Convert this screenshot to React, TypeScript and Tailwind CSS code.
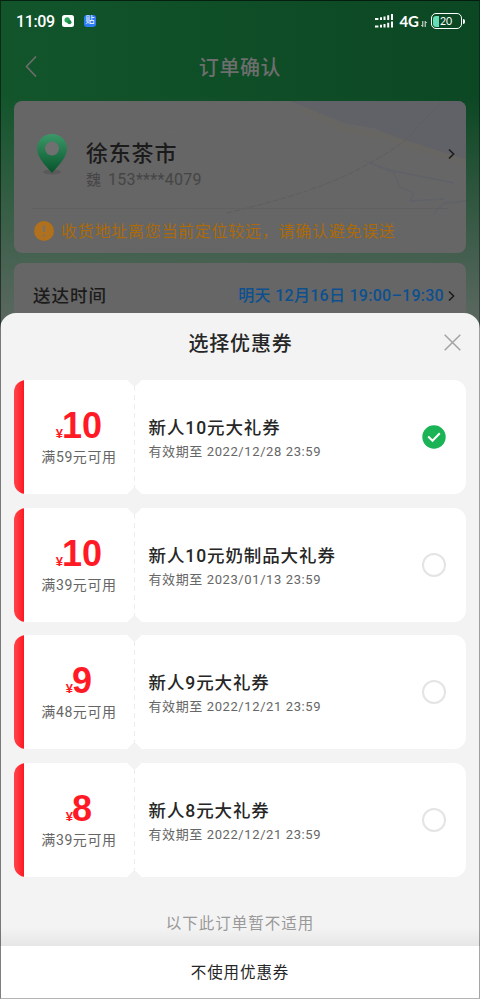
import React, { useState } from 'react';

interface Coupon {
  amount: number;
  limit: string;
  title: string;
  expire: string;
}

const coupons: Coupon[] = [
  { amount: 10, limit: '满59元可用', title: '新人10元大礼券', expire: '有效期至 2022/12/28 23:59' },
  { amount: 10, limit: '满39元可用', title: '新人10元奶制品大礼券', expire: '有效期至 2023/01/13 23:59' },
  { amount: 9, limit: '满48元可用', title: '新人9元大礼券', expire: '有效期至 2022/12/21 23:59' },
  { amount: 8, limit: '满39元可用', title: '新人8元大礼券', expire: '有效期至 2022/12/21 23:59' },
];

const Chevron: React.FC = () => (
  <svg width="7" height="12" viewBox="0 0 7 12" fill="none" stroke="#1d1d1d" strokeWidth="1.6">
    <path d="M1 1.5 5.6 6 1 10.5" />
  </svg>
);

const StatusBar: React.FC = () => (
  <div className="flex h-[42px] items-center pl-4 pr-[15px] text-white">
    <span className="w-[46px] whitespace-nowrap pt-px text-base font-medium leading-none tracking-[-0.4px]">11:09</span>
    <svg className="-mt-px" width="12" height="12" viewBox="0 0 12 12">
      <rect width="12" height="12" rx="2.5" fill="#fff" />
      <circle cx="5.2" cy="5" r="2.7" fill="#2aa45c" />
      <circle cx="7.4" cy="7.2" r="2.1" fill="#1d8a4a" />
    </svg>
    <span className="-mt-px ml-2.5 flex size-3 items-center justify-center rounded-[3px] bg-[#2d7df6] text-[9px] leading-none">贴</span>
    <div className="ml-auto flex items-center">
      <svg width="18" height="14" viewBox="0 0 18 14" fill="#fff">
        <path d="M0 4h3.4v2H0zM5 3.2h2v2.8H5zM8.5 2.4h2V6h-2zM12.2 1.3h2V6h-2zM16 0h2v6h-2z" />
        <path d="M0 11.5h3.4v2H0zM5 10.7h2v2.8H5zM8.5 9.9h2v3.6h-2zM12.2 8.8h2v4.7h-2zM16 7.5h2v6h-2z" />
      </svg>
      <span className="ml-1.5 font-['Lato'] text-[15px] font-bold leading-none">4G</span>
      <svg className="ml-0.5 mt-1.5" width="6" height="6" viewBox="0 0 6 6" fill="none" stroke="#fff" strokeWidth="0.9">
        <path d="M1.8 0v5.6L.3 4M4.2 6V.4L5.7 2" />
      </svg>
      <div className="ml-1 flex h-4 w-[31px] items-center rounded-[5px] border-[1.5px] border-white p-px">
        <span className="h-[11px] w-[6px] rounded-l-[3px] bg-[#67dcb6]" />
        <span className="ml-px font-['Lato'] text-[10.5px] leading-none">20</span>
      </div>
      <span className="ml-px h-[5px] w-[2px] rounded-r bg-white" />
    </div>
  </div>
);

const MapLines: React.FC = () => (
  <svg className="absolute inset-0" width="452" height="152" viewBox="0 0 452 152" fill="none">
    <path d="M276 0 330 22 360 27 392 40 452 58V0Z" fill="#616267" />
    <path d="M288 8 330 28 366 34 452 62" stroke="#676663" strokeWidth="6" />
    <path d="M212 112Q300 92 345 68T400 30L428 0" stroke="#5f5e5e" strokeWidth="1" strokeDasharray="6 2" />
    <path d="M356 62 380 72 386 86 400 92 396 100 430 98M350 60 380 70 440 82M420 112 430 102 452 100" stroke="#606269" strokeWidth="1.3" />
    <path d="M100 60 180 20 210 0M120 152 230 60 340 112M300 112 330 152M60 0 190 40" stroke="#686867" strokeWidth="1" />
  </svg>
);

const OrderPage: React.FC = () => (
  <div className="h-[313px] bg-[linear-gradient(180deg,transparent_0,transparent_95px,#58675e_313px),linear-gradient(90deg,#12552b,#0b4723)]">
    <StatusBar />
    <div className="flex h-[59px] items-start px-[25px] pt-3.5">
      <svg width="12" height="21" viewBox="0 0 12 21" fill="none" stroke="#6e6e6e" strokeWidth="1.6">
        <path d="M11 .5 1.5 10.5 11 20.5" />
      </svg>
      <h1 className="mr-3 flex-1 text-center text-xl font-medium leading-6 tracking-[0.6px] text-[#6e6e6e]">订单确认</h1>
    </div>
    <div className="px-[14px]">
      <div className="relative h-[152px] overflow-hidden rounded-lg bg-[#666]">
        <MapLines />
        <div className="relative flex h-[107px] pl-[22px] pr-[11px]">
          <svg className="mt-8" width="32" height="44" viewBox="0 0 32 44">
            <defs>
              <linearGradient id="pin" x1="0" y1="0" x2="0" y2="1">
                <stop offset="0" stopColor="#3b9868" />
                <stop offset="1" stopColor="#07532b" />
              </linearGradient>
            </defs>
            <ellipse cx="16" cy="39" rx="9" ry="2.5" fill="#5a5a5a" />
            <path d="M16 1C7.500 1 1 7.500 1 15.500 1 24 8 31 16 40 24 31 31 24 31 15.500 31 7.500 24.500 1 16 1Z" fill="url(#pin)" />
            <circle cx="16" cy="15.500" r="7" fill="#707070" />
          </svg>
          <div className="ml-[18px] pt-[38px] text-[#1b1b1b]">
            <div className="text-[22px] font-medium leading-[30px] tracking-[0.8px]">徐东茶市</div>
            <div className="flex text-base leading-[22px] text-[#454545]">
              <span className="text-[15px]">魏</span>
              <span className="ml-[7px] tracking-[0.3px]">153****4079</span>
            </div>
          </div>
          <div className="ml-auto pt-[47px]"><Chevron /></div>
        </div>
        <div className="relative mx-[18px] flex h-[45px] items-center border-t border-[#606060] text-[#ac6a08]">
          <svg className="ml-0.5 shrink-0" width="20" height="20" viewBox="0 0 20 20">
            <circle cx="10" cy="10" r="10" fill="#b0701c" />
            <path d="M10 4.500v6.500M10 13.500v2" stroke="#77736c" strokeWidth="2.200" />
          </svg>
          <span className="ml-[7px] whitespace-nowrap pt-px text-base tracking-[0.73px]">收货地址离您当前定位较远，请确认避免误送</span>
        </div>
      </div>
      <div className="mt-2.5 flex h-[50px] items-center rounded-t-lg bg-[#666] pl-[19px] pr-[11px] pt-4">
        <span className="text-[17.5px] font-medium tracking-[1px] text-[#1b1b1b]">送达时间</span>
        <span className="ml-auto mr-1 whitespace-nowrap text-base font-medium tracking-[0.28px] text-[#0c5090]">明天 12月16日 19:00–19:30</span>
        <Chevron />
      </div>
    </div>
  </div>
);

const CouponCard: React.FC<{ coupon: Coupon; checked: boolean; onSelect: () => void }> = ({ coupon, checked, onSelect }) => (
  <div className="relative flex h-[114px] cursor-pointer overflow-hidden rounded-xl bg-white" onClick={onSelect}>
    <div className="w-[9.5px] bg-linear-to-r from-[#ff4249] to-[#ff1420]" />
    <div className="flex w-[111px] flex-col items-center pt-7">
      <div className="flex h-9 items-baseline font-['Liberation_Sans'] font-bold text-[#ff1a26]">
        <span className="text-[13px] leading-9">¥</span>
        <span className="-ml-px text-4xl leading-9">{coupon.amount}</span>
      </div>
      <div className="mt-[3px] text-[14px] leading-5 tracking-[0.6px] text-[#666]">{coupon.limit}</div>
    </div>
    <svg className="-ml-px" width="1" height="114" stroke="#ececec" strokeWidth="2">
      <path d="M0 6V110" strokeDasharray="5 4" />
    </svg>
    {/* ticket notches */}
    <span className="absolute -top-[6px] left-[115px] size-[11px] rotate-45 rounded-[2px] bg-[#f3f3f3]" />
    <span className="absolute -bottom-[6px] left-[115px] size-[11px] rotate-45 rounded-[2px] bg-[#f3f3f3]" />
    <div className="flex-1 pl-3.5 pt-9">
      <div className="text-[17.5px] font-medium leading-6 tracking-[0.9px] text-[#262626]">{coupon.title}</div>
      <div className="text-[13px] leading-6 tracking-[0.6px] text-[#666]">{coupon.expire}</div>
    </div>
    <div className="flex w-11 items-center">
      {checked ? (
        <svg width="24" height="24" viewBox="0 0 24 24" fill="none">
          <circle cx="12" cy="12" r="11.700" fill="#1ab457" />
          <path d="m6.200 11.500 4.300 4.300 7.300-7.600" stroke="#fff" strokeWidth="2" />
        </svg>
      ) : (
        <span className="size-6 rounded-full border-2 border-[#e4e4e4]" />
      )}
    </div>
  </div>
);

export default function App() {
  const [selected, setSelected] = useState(0);

  return (
    <div className="relative h-[999px] w-[480px] overflow-hidden bg-[#58675e] font-['Roboto','Noto_Sans_CJK_SC',sans-serif]">
      <OrderPage />
      <div className="flex h-[686px] flex-col rounded-t-2xl bg-[#f3f3f3]">
        <div className="flex h-[67px] items-start pl-[14px] pr-[19px] pt-[17px]">
          <h2 className="ml-[23px] flex-1 text-center text-xl font-medium leading-7 tracking-[0.8px] text-[#262626]">选择优惠券</h2>
          <svg className="mt-1" width="17" height="17" viewBox="0 0 17 17" stroke="#a3a3a3" strokeWidth="1.500">
            <path d="m.7.700 15.600 15.600M16.300.700.700 16.300" />
          </svg>
        </div>
        <div className="flex flex-col gap-[13.6px] px-[14px]">
          {coupons.map((coupon, idx) => (
            <CouponCard key={idx} coupon={coupon} checked={idx === selected} onSelect={() => setSelected(idx)} />
          ))}
        </div>
        <div className="flex flex-1 items-end justify-center bg-[linear-gradient(0deg,#e6e6e6,#f3f3f3_18px)] pb-2.5 text-[15.5px] tracking-[1px] text-[#999]">
          以下此订单暂不适用
        </div>
        <button className="h-[53px] bg-white pt-0.5 text-[15.5px] tracking-[0.9px] text-[#262626]">不使用优惠券</button>
      </div>
      {/* screen edge */}
      <div className="pointer-events-none absolute inset-0 border border-t-black/60 border-r-black/35 border-b-black/30 border-l-black/50" />
    </div>
  );
}
